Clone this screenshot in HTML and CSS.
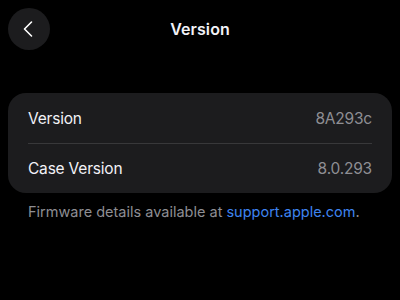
FILE: index.html
```html
<!DOCTYPE html>
<html lang="en">
<head>
  <meta charset="UTF-8">
  <title>Version</title>
  <link rel="stylesheet" href="styles.css">
</head>
<body>
  <header class="nav-bar">
    <button class="back-btn" aria-label="Back">
      <svg width="12" height="18" viewBox="0 0 12 18">
        <path d="M9.5 2 L2.5 9 L9.5 16" fill="none" stroke="#fff" stroke-width="1.6" stroke-linecap="round" stroke-linejoin="round"/>
      </svg>
    </button>
    <h1 class="nav-title">Version</h1>
    <span class="nav-spacer"></span>
  </header>

  <section class="card">
    <div class="row">
      <span class="row-label">Version</span>
      <span class="row-value">8A293c</span>
    </div>
    <div class="row">
      <span class="row-label">Case Version</span>
      <span class="row-value">8.0.293</span>
    </div>
  </section>

  <p class="footnote">Firmware details available at <a href="#">support.apple.com</a>.</p>
</body>
</html>
```

FILE: styles.css
```css
*, *::before, *::after { margin: 0; padding: 0; box-sizing: border-box; }
body {
  font-family: Inter, 'Open Sans', sans-serif;
  background: #000;
  color: #f2f2f7;
  padding: 8px;
}
/* Top navigation */
.nav-bar {
  display: flex;
  align-items: center;
  justify-content: space-between;
  height: 42px;
}
.back-btn {
  width: 42px;
  height: 42px;
  border-radius: 50%;
  border: none;
  background: #1c1c1e;
  display: flex;
  align-items: center;
  justify-content: center;
  padding-right: 2px;
}
.nav-title {
  font-size: 16px;
  font-weight: 600;
  letter-spacing: 0.1px;
}
.nav-spacer {
  width: 42px;
}
/* Grouped list */
.card {
  margin-top: 43px;
  background: #1c1c1e;
  border-radius: 18px;
  padding: 0 20px;
}
.row {
  display: flex;
  justify-content: space-between;
  align-items: center;
  height: 50px;
  font-size: 15.5px;
  letter-spacing: -0.2px;
}
.row + .row {
  border-top: 1px solid #38383a;
}
.row-value {
  color: #8e8e93;
}
.footnote {
  margin-top: 10px;
  padding: 0 20px;
  font-size: 14.5px;
  color: #8e8e93;
}
.footnote a {
  color: #3e84f0;
  text-decoration: none;
}
```
